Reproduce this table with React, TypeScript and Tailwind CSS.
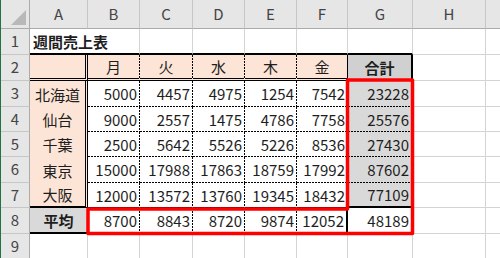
const RB = {
  grid: "border-r border-r-[#d4d4d4]",
  none: "",
  dash: "border-r border-r-transparent",
  solid: "border-r border-r-black",
  thick: "border-r-2 border-r-black",
  dbl: "border-r-[3px] border-r-black [border-right-style:double]",
};

const BB = {
  grid: "border-b border-b-[#d4d4d4]",
  none: "",
  dash: "border-b border-b-transparent",
  solid: "border-b border-b-black",
  thick: "border-b-2 border-b-black",
  dbl: "border-b-[3px] border-b-black [border-bottom-style:double]",
};

type Side = keyof typeof RB;

const COLS = ["A", "B", "C", "D", "E", "F", "G", "H", ""];

const NAMES = ["北海道", "仙台", "千葉", "東京", "大阪"];
const DATA = [
  [5000, 4457, 4975, 1254, 7542, 23228],
  [9000, 2557, 1475, 4786, 7758, 25576],
  [2500, 5642, 5526, 5226, 8536, 27430],
  [15000, 17988, 17863, 18759, 17992, 87602],
  [12000, 13572, 13760, 19345, 18432, 77109],
];
const AVG = [8700, 8843, 8720, 9874, 12052, 48189];
const DAYS = ["月", "火", "水", "木", "金"];

type CellSpec = {
  r: Side;
  b: Side;
  bg?: string;
  text?: string | number;
  align?: "left" | "center" | "right";
  bold?: boolean;
};

function spec(row: number, col: number): CellSpec {
  // col 0 = A ... 8 = I
  if (row === 1) {
    if (col === 0) return { r: "none", b: "thick", text: "週間売上表", align: "left", bold: true };
    if (col <= 6) return { r: "grid", b: "thick" };
    return { r: "grid", b: "grid" };
  }
  if (row === 2) {
    if (col === 0) return { r: "dbl", b: "dbl", bg: "bg-[#fce4d6]" };
    if (col <= 4) return { r: "dash", b: "dbl", bg: "bg-[#fce4d6]", text: DAYS[col - 1], align: "center" };
    if (col === 5) return { r: "solid", b: "dbl", bg: "bg-[#fce4d6]", text: DAYS[4], align: "center" };
    if (col === 6) return { r: "thick", b: "solid", bg: "bg-[#d0d0d0]", text: "合計", align: "center", bold: true };
    return { r: "grid", b: "grid" };
  }
  if (row >= 3 && row <= 7) {
    const last = row === 7;
    const i = row - 3;
    if (col === 0) return { r: "dbl", b: last ? "thick" : "none", bg: "bg-[#fce4d6]", text: NAMES[i], align: "center" };
    if (col <= 4) return { r: "dash", b: last ? "solid" : "dash", text: DATA[i][col - 1], align: "right" };
    if (col === 5) return { r: "solid", b: last ? "solid" : "dash", text: DATA[i][4], align: "right" };
    if (col === 6) return { r: "thick", b: last ? "thick" : "dash", bg: "bg-[#d9d9d9]", text: DATA[i][5], align: "right" };
    return { r: "grid", b: "grid" };
  }
  if (row === 8) {
    if (col === 0) return { r: "solid", b: "thick", bg: "bg-[#d9d9d9]", text: "平均", align: "center", bold: true };
    if (col <= 4) return { r: "dash", b: "thick", text: AVG[col - 1], align: "right" };
    if (col <= 6) return { r: "thick", b: "thick", text: AVG[col - 1], align: "right" };
    return { r: "grid", b: "grid" };
  }
  return { r: "grid", b: "grid" };
}

const ALIGN = {
  left: "justify-start pl-[3px]",
  center: "justify-center",
  right: "justify-end pr-[2px]",
};

// Excel's "dotted" border: 2px on, 1px off
function Cell({ s }: { s: CellSpec }) {
  return (
    <div
      className={`relative flex items-center overflow-visible whitespace-nowrap text-[15px] leading-none text-[#1e1e1e] ${RB[s.r]} ${BB[s.b]} ${s.bg ?? ""} ${ALIGN[s.align ?? "left"]} ${s.bold ? "font-bold" : ""}`}
    >
      {s.text}
      {s.r === "dash" && (
        <span className="absolute -right-px top-0 bottom-0 w-px [background-image:repeating-linear-gradient(to_bottom,#000_0px,#000_2px,transparent_2px,transparent_3px)]" />
      )}
      {s.b === "dash" && (
        <span className="absolute left-0 -right-px -bottom-px h-px [background-image:repeating-linear-gradient(to_right,#000_0px,#000_2px,transparent_2px,transparent_3px)]" />
      )}
    </div>
  );
}

export default function App() {
  const rows = [1, 2, 3, 4, 5, 6, 7, 8, 9];
  return (
    <div className="w-[500px] h-[258px] overflow-hidden bg-white border-l border-l-[#217346] font-['Noto_Sans_CJK_JP',sans-serif]">
      <div className="relative grid grid-cols-[29px_58px_52px_53px_52px_52px_51px_65px_73px_60px] grid-rows-[29px_26px_26px_26px_25px_25px_26px_25px_26px_25px]">
        {/* corner */}
        <div className="relative bg-[#e6e6e6] border-r border-r-[#ababab] border-b border-b-[#ababab]">
          <svg className="absolute left-0 top-0" width="29" height="29" viewBox="0 0 29 29">
            <polygon points="25,10 25,25 10,25" fill="#b8b8b8" />
          </svg>
        </div>
        {COLS.map((c, i) => (
          <div
            key={`h${i}`}
            className="flex items-center justify-center bg-[#e6e6e6] border-r border-r-[#c6c6c6] border-b border-b-[#ababab] text-[15px] text-[#444]"
          >
            {c}
          </div>
        ))}
        {rows.map((row) => [
          <div
            key={`n${row}`}
            className="flex items-center justify-center bg-[#e6e6e6] border-r border-r-[#ababab] border-b border-b-[#c6c6c6] text-[15px] text-[#444]"
          >
            {row}
          </div>,
          ...COLS.map((_, col) => <Cell key={`c${row}-${col}`} s={spec(row, col)} />),
        ])}
        {/* selection outline */}
        <svg className="absolute left-[-1px] top-0 pointer-events-none" width="500" height="258" viewBox="0 0 500 258">
          <path
            d="M88 209 H347.5 V80 H412.5 V233.5 H88 Z"
            fill="none"
            stroke="#ff0000"
            strokeWidth="3.5"
            strokeLinejoin="round"
          />
        </svg>
      </div>
    </div>
  );
}
